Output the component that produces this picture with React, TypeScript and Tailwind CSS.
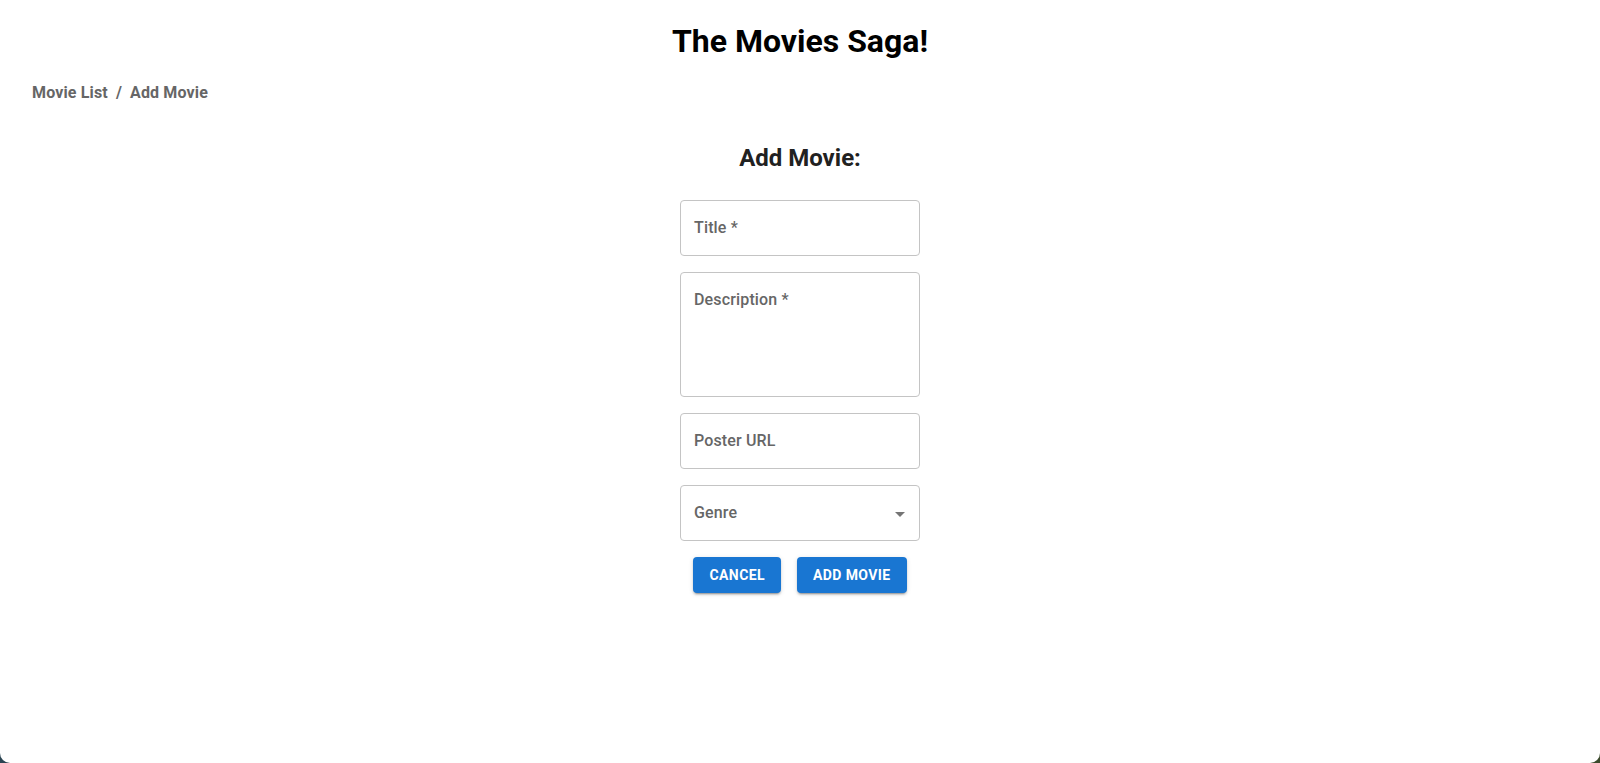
import { ReactNode } from "react";

interface FieldProps {
  label: string;
  tall?: boolean;
  select?: boolean;
}

const Field = ({ label, tall, select }: FieldProps) => {
  return (
    <div
      className={`relative w-[240px] rounded-[4px] border border-[#c4c4c4] bg-white pl-[13px] pr-[14px] pt-[15px] ${
        tall ? "h-[125px]" : "h-[56px]"
      }`}
    >
      <span className="block text-[16px] leading-6 font-medium tracking-[0.15px] text-[#666666]">
        {label}
      </span>
      {select && (
        <svg
          className="absolute right-[7px] top-[16px] h-6 w-6"
          viewBox="0 0 24 24"
          fill="rgba(0,0,0,0.54)"
        >
          <path d="M7 10l5 5 5-5z" />
        </svg>
      )}
    </div>
  );
};

const Btn = ({ children }: { children: ReactNode }) => (
  <button
    type="button"
    className="h-9 rounded-[4px] bg-[#1976d2] px-4 text-[14px] font-bold uppercase tracking-[0.4px] text-white shadow-[0_3px_1px_-2px_rgba(0,0,0,0.2),0_2px_2px_0_rgba(0,0,0,0.14),0_1px_5px_0_rgba(0,0,0,0.12)]"
  >
    {children}
  </button>
);

export default function App() {
  return (
    <div className="h-screen bg-gradient-to-r from-[#2b4452] to-[#3b4a2c] font-['Roboto',sans-serif]">
      <div className="flex h-full flex-col rounded-b-[10px] bg-white">
        <h1 className="pt-[22px] text-center text-[32px] leading-[38px] font-bold text-black">
          The Movies Saga!
        </h1>

        <nav className="mt-[21px] flex items-center px-8 text-[16px] leading-6 font-bold tracking-[0.15px] text-[#666666]">
          <span>Movie List</span>
          <span className="mx-2">/</span>
          <span>Add Movie</span>
        </nav>

        <h2 className="mt-[39px] text-center text-[24px] leading-[28px] font-bold text-[#212121]">
          Add Movie:
        </h2>

        <form className="mt-[28px] flex flex-col items-center gap-4">
          <Field label="Title *" />
          <Field label="Description *" tall />
          <Field label="Poster URL" />
          <Field label="Genre" select />
          <div className="flex gap-4">
            <Btn>Cancel</Btn>
            <Btn>Add Movie</Btn>
          </div>
        </form>
      </div>
    </div>
  );
}
